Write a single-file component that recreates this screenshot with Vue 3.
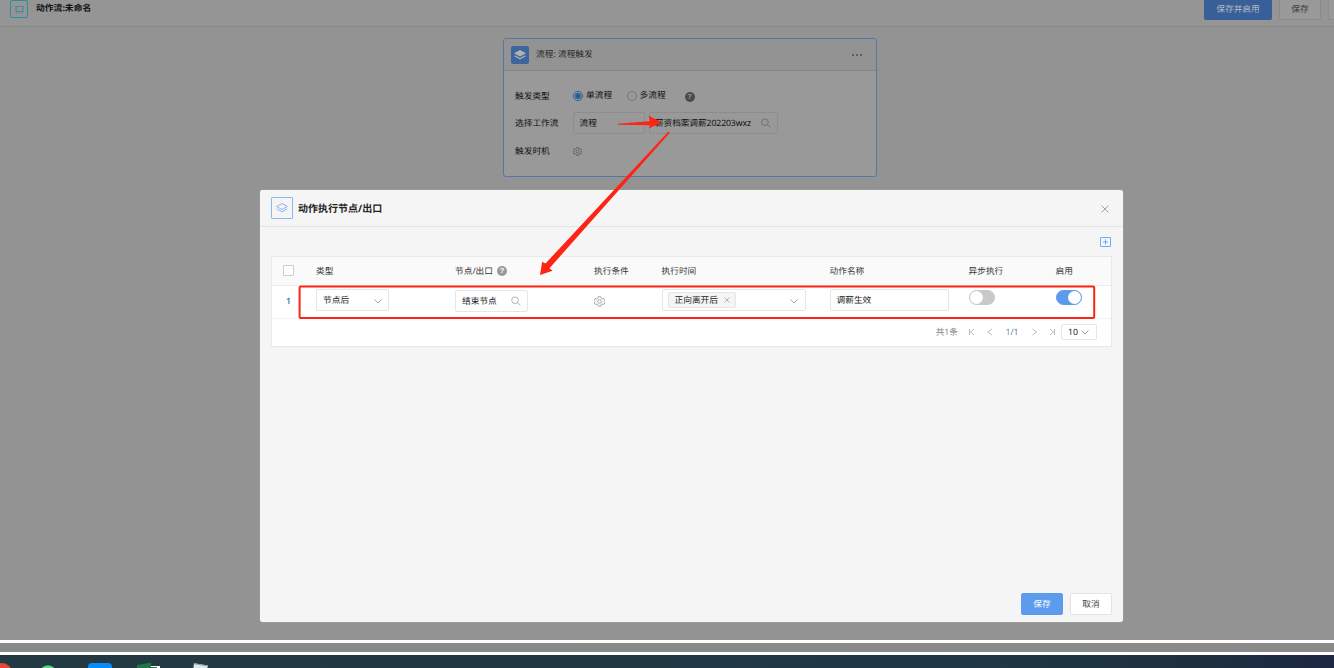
<script setup>
const gear = 'M4.700 .8h2.600l.5 1.700 1.300.7 1.700-.4 1.100 2.100-1.100 1.100 0 0 1.100 1.100-1.100 2.100-1.700-.4-1.300.7-.5 1.700H4.700l-.5-1.700-1.300-.7-1.700.4L.1 7.100 1.200 6 .1 4.900l1.100-2.100 1.700.4 1.300-.7z'
</script>

<template>
  <div class="screen">
    <div class="page">
      <header class="topbar">
        <span class="flow-icon">
          <svg width="9" height="9" viewBox="0 0 9 9"><path d="M1 1.500h7v5H1z" /><path class="foot" d="M1 8h7" /></svg>
        </span>
        <b>动作流:未命名</b>
        <span class="grow"></span>
        <span class="top-primary">保存并启用</span>
        <span class="top-plain">保存</span>
        <span class="top-cut"></span>
      </header>

      <section class="trigger">
        <div class="trigger-head">
          <span class="stack-icon">
            <svg width="12" height="12" viewBox="0 0 12 12"><path d="M6 1l6 3.200-6 3.200L0 4.200z" fill="#b2b2b2" /><path d="M.6 6.800L6 9.700l5.400-2.900" fill="none" stroke="#b2b2b2" stroke-width="1.200" /></svg>
          </span>
          <span>流程: 流程触发</span>
          <span class="dots"><i></i><i></i><i></i></span>
        </div>
        <div class="trigger-body">
          <div class="field">
            <span class="label">触发类型</span>
            <span class="radio on"></span><span class="radio-text">单流程</span>
            <span class="radio"></span><span class="radio-text">多流程</span>
            <span class="help dark">?</span>
          </div>
          <div class="field">
            <span class="label">选择工作流</span>
            <span class="dim-input kind">流程<svg width="8" height="5" viewBox="0 0 8 5"><path d="M.5.5L4 4 7.5.5" fill="none" stroke="#777" stroke-width=".8" /></svg></span>
            <span class="dim-input flow"><span class="flow-name">薪资档案调薪202203wxz</span><svg width="10" height="10" viewBox="0 0 10 10"><path d="M7.3 4.2a3.3 3.3 0 1 1-6.6 0a3.3 3.3 0 0 1 6.6 0M6.5 6.6L9.3 9.4" fill="none" stroke="#6c6c6c" stroke-width=".9" /></svg></span>
          </div>
          <div class="field">
            <span class="label">触发时机</span>
            <svg class="gear" width="9" height="9" viewBox="0 0 12 12"><path :d="gear" fill="none" stroke="#5f5f5f" stroke-width="1.1" /><circle cx="6" cy="6" r="2" fill="none" stroke="#5f5f5f" stroke-width="1.1" /></svg>
          </div>
        </div>
      </section>
    </div>

    <div class="strip"></div>
    <div class="taskbar">
      <svg width="260" height="13" viewBox="0 0 260 13">
        <circle cx="2" cy="18" r="10" fill="#e8463c" />
        <circle cx="48" cy="19" r="8.7" fill="#55dc78" />
        <rect x="88" y="8" width="24" height="20" rx="4" fill="#078cff" />
        <path d="M137 10l14-2.3V13h-14z" fill="#1d7a48" />
        <path d="M151 11h9v2h-9z" fill="#fff" />
        <path d="M151 12h6v1h-6z" fill="#277b4c" />
        <path d="M194 8.3l14 2.2-.6 2.5h-14z" fill="#dce7e9" />
        <path d="M194 8.3l14 2.2v1l-14-2.2z" fill="#98a2a3" />
      </svg>
    </div>

    <div class="modal">
      <div class="modal-head">
        <span class="outline-icon">
          <svg width="12" height="12" viewBox="0 0 12 12"><path d="M6 1.5l5.3 3L6 7.6.7 4.500z M.7 6.800L6 9.900l5.300-3.100" fill="none" stroke="#79adf7" stroke-width=".9" stroke-linejoin="round" /></svg>
        </span>
        <b>动作执行节点/出口</b>
        <svg class="close" width="8" height="8" viewBox="0 0 8 8"><path d="M.5.500l7 7M7.500.500l-7 7" stroke="#999" stroke-width=".9" /></svg>
      </div>
      <div class="modal-tools">
        <svg width="11" height="11" viewBox="0 0 11 11"><path d="M.5.500h10v9H.5z" fill="#f1f7ff" stroke="#76aaf0" /><path d="M5.500 2.500v5M3 5h5" stroke="#669fec" stroke-width=".9" /></svg>
      </div>
      <div class="table">
        <div class="row head">
          <span class="center"><i class="checkbox"></i></span>
          <span>类型</span>
          <span class="with-help">节点/出口<i class="help">?</i></span>
          <span>执行条件</span>
          <span>执行时间</span>
          <span>动作名称</span>
          <span>异步执行</span>
          <span>启用</span>
        </div>
        <div class="row data">
          <span class="center number">1</span>
          <span><span class="input small">节点后<svg class="down" width="8" height="5" viewBox="0 0 8 5"><path d="M.5.500L4 4 7.500.500" fill="none" stroke="#999" stroke-width=".9" /></svg></span></span>
          <span><span class="input small low">结束节点<svg width="10" height="10" viewBox="0 0 10 10"><path d="M7.300 4.200a3.300 3.300 0 1 1-6.600 0a3.300 3.300 0 0 1 6.600 0M6.500 6.600L9.300 9.400" fill="none" stroke="#aaa" stroke-width=".9" /></svg></span></span>
          <span><svg class="gear" width="11" height="11" viewBox="0 0 12 12"><path :d="gear" fill="none" stroke="#a0a0a0" stroke-width="1" /><circle cx="6" cy="6" r="2" fill="none" stroke="#a0a0a0" stroke-width="1" /></svg></span>
          <span><span class="input time"><span class="tag">正向离开后<svg width="6" height="6" viewBox="0 0 6 6"><path d="M.5.500l5 5M5.500.500l-5 5" stroke="#999" stroke-width=".7" /></svg></span><svg class="down" width="8" height="5" viewBox="0 0 8 5"><path d="M.5.500L4 4 7.500.500" fill="none" stroke="#999" stroke-width=".9" /></svg></span></span>
          <span><span class="input name">调薪生效</span></span>
          <span><i class="switch"></i></span>
          <span><i class="switch on"></i></span>
        </div>
        <div class="pager">
          <span class="total">共1条</span>
          <svg width="47" height="8" viewBox="0 0 47 8"><path d="M11.500 1v6M16 1l-3.500 3L16 7M34 1l-4 3 4 3" fill="none" stroke="#aaa" stroke-width=".8" /></svg>
          <span class="current"><em>1</em>/1</span>
          <svg width="42" height="8" viewBox="0 0 42 8"><path d="M13.500 1l4 3-4 3M31 1l3.500 3L31 7M35.500 1v6" fill="none" stroke="#aaa" stroke-width=".8" /></svg>
          <span class="size">10<svg width="8" height="5" viewBox="0 0 8 5"><path d="M.5.500L4 4 7.500.500" fill="none" stroke="#999" stroke-width=".9" /></svg></span>
        </div>
      </div>
      <div class="modal-foot">
        <span class="btn primary">保存</span>
        <span class="btn">取消</span>
      </div>
    </div>

    <svg class="marks" width="1334" height="668" viewBox="0 0 1334 668">
      <path d="M618 123.700L650 121.200L648.600 115.800L661.500 122.300L648.800 128.600L650 125.300L618 124.700Z" fill="#ff2314" />
      <path d="M668.500 131.500L669.800 132.700L549.500 268.200L552.500 270.800L540 275L542.200 261.800L545.500 263.500Z" fill="#ff2314" />
      <rect x="299.600" y="286.400" width="794.600" height="31.600" rx="1" fill="none" stroke="#ff2314" stroke-width="2" />
    </svg>
  </div>
</template>

<style>
html, body { margin: 0; overflow: hidden; }
</style>

<style scoped>
* { box-sizing: border-box; }
.screen {
  position: relative; width: 1334px; height: 668px; overflow: hidden; background: #fff;
  font: 8.7px/12px "Noto Sans", "Noto Sans CJK SC", sans-serif;
  color: #222; white-space: nowrap; text-rendering: geometricPrecision;
}
i, em { font-style: normal; }
svg { display: block; flex: none; }
.grow { flex: 1; }
.page { height: 640px; background: #939393; color: #111; }
.topbar { display: flex; height: 27px; padding-left: 10px; border-bottom: 1px solid #898989; background: #959595; }
.topbar b { margin: 2px 0 0 8px; color: #111; font-size: 8.8px; }
.flow-icon { display: grid; place-items: center; width: 18px; height: 18px; border: 1px solid #2e8ba0; border-radius: 2px; }
.flow-icon path { fill: none; stroke: #438b9a; stroke-width: 1.2; }
.flow-icon .foot { stroke-dasharray: 1 1; }
.top-primary { width: 68px; height: 20px; border-radius: 0 0 2px 2px; background: #385f98; color: #b1b8c2; text-align: center; line-height: 18px; }
.top-plain { width: 42px; height: 20px; margin-left: 7px; border: 1px solid #8c8c8c; border-top: 0; border-radius: 0 0 2px 2px; background: #999; color: #3c3c3c; text-align: center; line-height: 18px; }
.top-cut { width: 6px; height: 20px; margin-left: 7px; border: solid #8c8c8c; border-width: 0 0 1px 1px; border-radius: 0 0 0 2px; background: #999; }

.trigger { width: 374px; height: 139px; margin: 11px 0 0 503px; border: 1px solid #5576a6; border-radius: 3px; background: #999; }
.trigger-head { display: flex; align-items: center; height: 32px; padding: 0 14px 0 7px; border-bottom: 1px solid #858585; border-radius: 3px 3px 0 0; background: #939393; color: #2a2a2a; }
.trigger-head > span:nth-child(2) { margin-top: -1px; }
.stack-icon { display: grid; place-items: center; width: 18px; height: 18px; margin-right: 7px; border-radius: 2px; background: #3f659f; }
.dots { display: flex; gap: 2px; margin-left: auto; }
.dots i { width: 2px; height: 2px; background: #606060; }
.trigger-body { padding: 11px 0 0 11px; }
.field { display: flex; align-items: center; height: 27.500px; }
.label { width: 58px; }
.radio { display: grid; place-items: center; width: 10px; height: 10px; border: 1px solid #777; border-radius: 50%; }
.radio.on { border-color: #2d5c9d; }
.radio.on::after { content: ""; width: 6px; height: 6px; border-radius: 50%; background: #2d5c9d; }
.radio-text { width: 40.500px; margin: -2px 0 0 3px; }
.radio-text + .radio + .radio-text { width: 45px; }
.help { display: inline-grid; place-items: center; width: 10px; height: 10px; border-radius: 50%; background: #999; color: #fff; font: bold 7.500px/10px "Liberation Sans", sans-serif; }
.help.dark { margin-top: 2px; background: #4a4a4a; color: #999; }
.dim-input { display: flex; align-items: center; justify-content: space-between; height: 22px; padding: 0 6px; border: 1px solid #8d8d8d; border-radius: 2px; }
.dim-input.kind { width: 72px; margin-right: 4px; padding-left: 5.500px; }
.dim-input.flow { width: 129px; padding-left: 5px; }
.flow-name { letter-spacing: -.1px; }

.strip { height: 9px; margin-top: 3px; background: #8a8a8a; }
.taskbar { height: 13px; margin-top: 3px; background: linear-gradient(90deg, #243a43, #203844 70%, #1e3040 90%, #1d2842); }

.modal { position: absolute; left: 260px; top: 190px; width: 863px; height: 432px; display: flex; flex-direction: column; border-radius: 3px; background: #f5f5f5; box-shadow: 0 0 1px #ddd; }
.modal-head { display: flex; align-items: center; height: 37px; padding: 0 14px 0 11px; border-bottom: 1px solid #e4e4e4; }
.modal-head b { margin-left: 5px; color: #222; font-size: 10px; line-height: 14px; }
.outline-icon { display: grid; place-items: center; width: 22px; height: 22px; border: 1px solid #8ab7f8; border-radius: 1px; }
.close { margin: 2px 0 0 auto; }
.modal-tools { display: flex; justify-content: flex-end; height: 29px; padding: 10px 12px 0 0; }
.table { width: 841px; height: 91px; margin-left: 11px; border: 1px solid #e9e9e9; background: #fff; }
.row { display: grid; grid-template-columns: 44px 139px 139px 67.500px 168px 139px 87px 1fr; align-items: center; }
.row.head { height: 29px; padding-bottom: 1px; border-bottom: 1px solid #eee; background: #fafafa; color: #383838; }
.row.data { height: 33px; border-bottom: 1px solid #f2f2f2; padding-bottom: 4px; }
.center { display: flex; justify-content: center; padding-right: 11px; }
.checkbox { width: 11px; height: 11px; border: 1px solid #ccc; border-radius: 1px; background: #fff; }
.with-help { display: flex; align-items: center; gap: 4px; }
.number { color: #34748a; padding-top: 1px; font-family: "Open Sans", sans-serif; font-weight: 600; }
.input { display: flex; align-items: center; justify-content: space-between; height: 22px; padding: 0 6px; border: 1px solid #e6e6e6; border-radius: 2px; background: #fff; }
.input.small { width: 72.500px; }
.input.low { position: relative; top: 1px; }
.input.time { width: 144px; padding: 0 7px 0 5px; }
.input.name { width: 119px; }
.down { margin-top: 2px; }
.gear { position: relative; top: 1px; }
.tag { display: flex; align-items: center; gap: 6px; height: 16px; padding: 0 5px 1px 6px; border: 1px solid #e6e6e6; border-radius: 2px; background: #f5f5f5; }
.switch { display: flex; width: 26px; height: 15px; margin-top: -5px; border: 1px solid #c8c8c8; border-radius: 8px; background: #c8c8c8; }
.switch::after { content: ""; width: 13px; height: 13px; border-radius: 50%; background: #fff; }
.switch.on { justify-content: flex-end; border-color: #5c9aed; background: #5c9aed; }
.pager { display: flex; align-items: center; justify-content: flex-end; height: 26px; padding-right: 14px; color: #888; }
.current { width: 14px; text-align: center; color: #777; }
.current em { color: #5b8ddd; }
.size { display: flex; align-items: center; justify-content: space-between; width: 36px; height: 16px; padding: 0 7px 0 6px; border: 1px solid #e6e6e6; border-radius: 2px; color: #222; }
.modal-foot { display: flex; justify-content: flex-end; gap: 7px; margin-top: auto; padding: 0 11px 7px 0; }
.btn { width: 42px; height: 22px; border: 1px solid #e3e3e3; border-radius: 2px; background: #fff; color: #444; text-align: center; line-height: 20px; }
.btn.primary { border-color: #5d9cec; background: #5d9cec; color: #fff; }
.marks { position: absolute; inset: 0; pointer-events: none; }
</style>
